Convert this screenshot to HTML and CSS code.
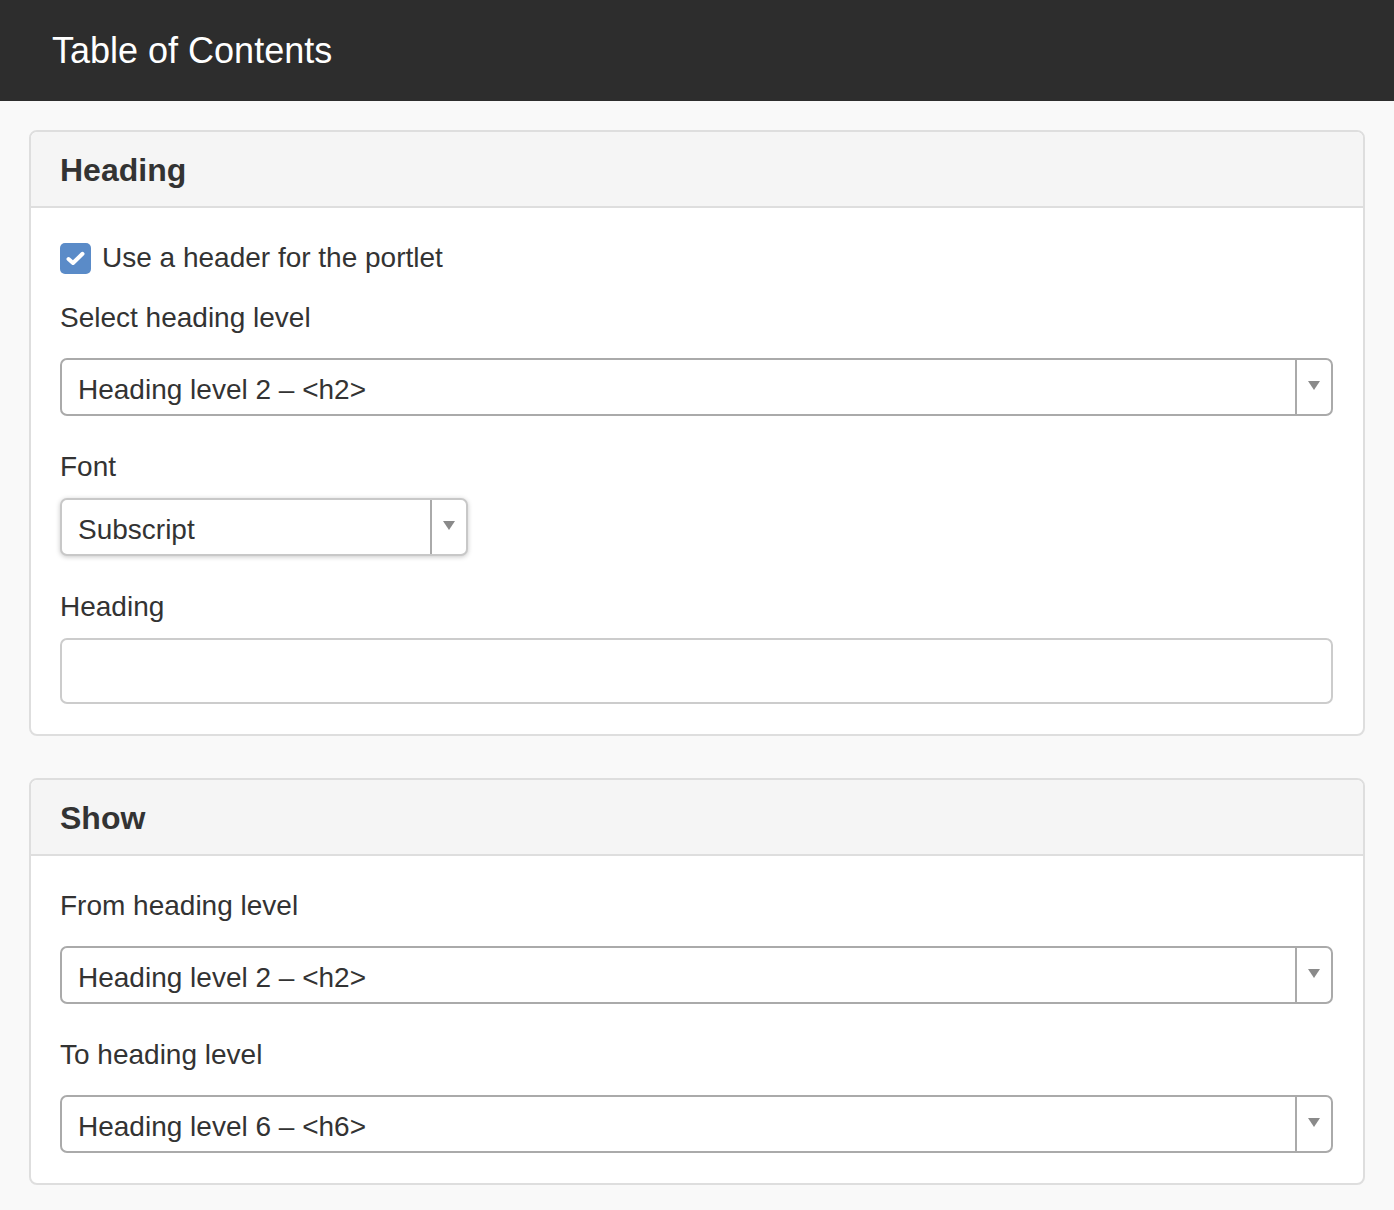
FILE: index.html
```html
<!doctype html>
<html lang="en">
    <head>
        <title>Table of Contents</title>
        <link rel="stylesheet" href="styles.css">
    </head>
    <body>
        <div class="topbar">
            <h1 class="topbar-title">Table of Contents</h1>
        </div>
        <div class="content">
            <div class="panel">
                <div class="panel-head">Heading</div>
                <div class="panel-body">
                    <label class="check-row">
                        <span class="checkbox">
                            <svg width="19" height="15" viewBox="0 0 19 15">
                                <path d="M2.5 8 L7 12 L16.5 2.8" fill="none" stroke="#fff" stroke-width="4" stroke-linecap="round" stroke-linejoin="round"/>
                            </svg>
                        </span>
                        Use a header for the portlet
                    </label>
                    <div class="field">
                        <div class="field-label">Select heading level</div>
                        <div class="select">
                            <span class="select-value">Heading level 2 – &lt;h2&gt;</span>
                            <span class="select-arrow"></span>
                        </div>
                    </div>
                    <div class="field">
                        <div class="field-label tight">Font</div>
                        <div class="select small">
                            <span class="select-value">Subscript</span>
                            <span class="select-arrow"></span>
                        </div>
                    </div>
                    <div class="field last">
                        <div class="field-label tight">Heading</div>
                        <div class="text-input"></div>
                    </div>
                </div>
            </div>

            <div class="panel">
                <div class="panel-head">Show</div>
                <div class="panel-body">
                    <div class="field">
                        <div class="field-label">From heading level</div>
                        <div class="select">
                            <span class="select-value">Heading level 2 – &lt;h2&gt;</span>
                            <span class="select-arrow"></span>
                        </div>
                    </div>
                    <div class="field last">
                        <div class="field-label">To heading level</div>
                        <div class="select">
                            <span class="select-value">Heading level 6 – &lt;h6&gt;</span>
                            <span class="select-arrow"></span>
                        </div>
                    </div>
                </div>
            </div>
        </div>
    </body>
</html>
```

FILE: styles.css
```css
body {
    margin: 0;
    background: #f9f9f9;
    font-family: "Liberation Sans", Arial, sans-serif;
    color: #333;
}

.topbar {
    background: #2d2d2d;
    height: 101px;
    padding-left: 52px;
    display: flex;
    align-items: center;
}
.topbar-title {
    margin: 0;
    color: #fff;
    font-size: 36px;
    font-weight: normal;
}

.content {
    padding: 29px 29px 20px;
}

.panel {
    background: #fff;
    border: 2px solid #dedede;
    border-radius: 8px;
    margin-bottom: 42px;
    overflow: hidden;
}
.panel-head {
    background: #f5f5f5;
    border-bottom: 2px solid #dedede;
    height: 74px;
    line-height: 77px;
    padding-left: 29px;
    font-size: 32px;
    font-weight: bold;
}
.panel-body {
    padding: 30px 30px 30px 29px;
}

.check-row {
    display: flex;
    align-items: center;
    gap: 11px;
    height: 40px;
    font-size: 28px;
    margin-bottom: 20px;
}
.checkbox {
    width: 31px;
    height: 31px;
    border-radius: 5px;
    background: #5a8bc8;
    display: flex;
    align-items: center;
    justify-content: center;
}

.field {
    margin-bottom: 31px;
}
.field.last {
    margin-bottom: 0;
}
.field-label {
    font-size: 28px;
    line-height: 40px;
    margin-bottom: 20px;
}
.field-label.tight {
    margin-bottom: 11px;
}

.select {
    display: flex;
    height: 58px;
    box-sizing: border-box;
    border: 2px solid #aaa;
    border-radius: 7px;
    background: #fff;
}
.select.small {
    width: 408px;
    border-color: #c8c8c8;
    box-shadow: 0 1px 5px rgba(0, 0, 0, 0.22);
}
.select-value {
    flex: 1;
    padding: 3px 0 0 16px;
    font-size: 28px;
    line-height: 53px;
}
.select-arrow {
    width: 34px;
    border-left: 2px solid #aaa;
    position: relative;
}
.select-arrow::after {
    content: "";
    position: absolute;
    left: 11px;
    top: 21px;
    border-left: 6px solid transparent;
    border-right: 6px solid transparent;
    border-top: 9px solid #8a8a8a;
}

.text-input {
    height: 66px;
    box-sizing: border-box;
    border: 2px solid #ccc;
    border-radius: 7px;
    background: #fff;
}
```
